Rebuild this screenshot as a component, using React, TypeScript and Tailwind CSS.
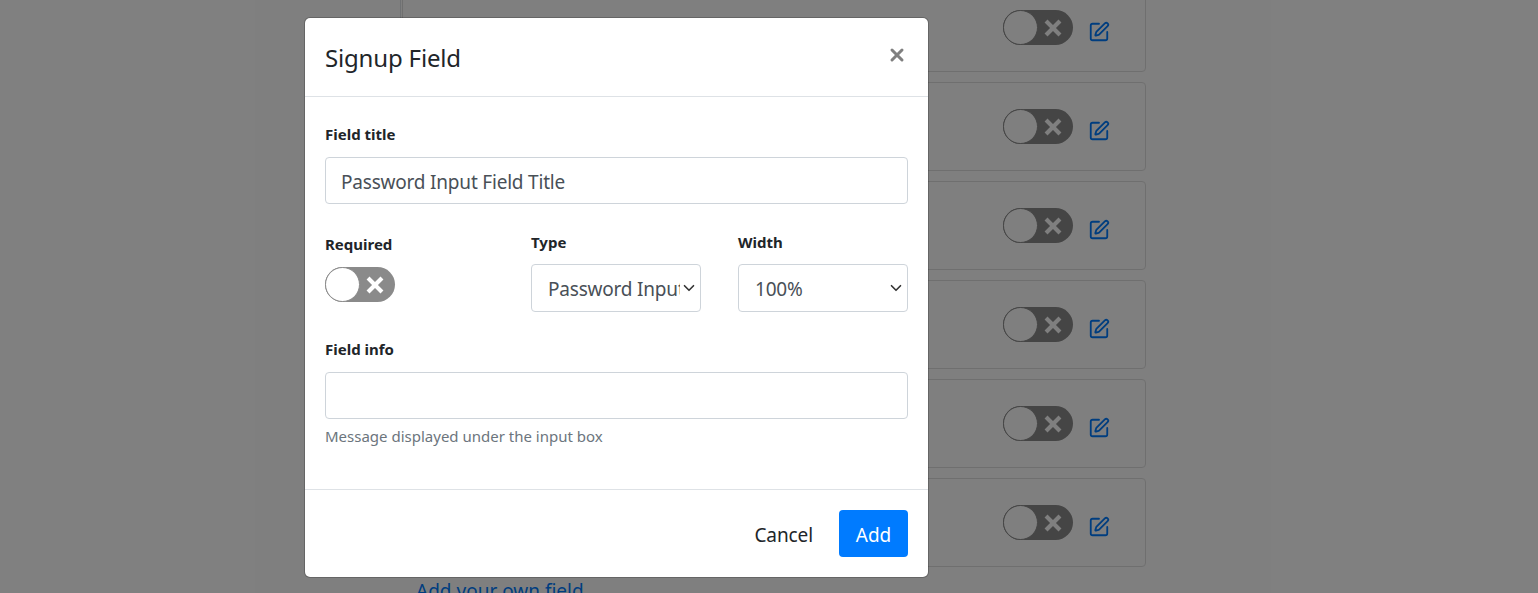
import { ChevronDown, SquarePen, X } from 'lucide-react'

const rows = [0, 1, 2, 3, 4, 5]

function Toggle() {
  return (
    <div className="relative h-[35px] w-[70px] rounded-full bg-[#8a8a8a]">
      <div className="h-[35px] w-[35px] rounded-full border border-[#8a8a8a] bg-white" />
      <X
        className="absolute left-[39px] top-[7px] h-[22px] w-[22px] text-white"
        strokeWidth={4.5}
        strokeLinecap="square"
      />
    </div>
  )
}

function Label({ children }: { children: React.ReactNode }) {
  return <div className="text-[15px] leading-[22px] font-bold text-[#212529]">{children}</div>
}

function Select({ value }: { value: string }) {
  return (
    <div className="relative mt-[11px] w-[170px]">
      <select className="h-[48px] w-full appearance-none rounded border border-[#ced4da] bg-white pt-[3px] pr-[20px] pl-[16px] text-[19px] tracking-[-0.2px] text-[#495057]">
        <option>{value}</option>
      </select>
      <ChevronDown className="pointer-events-none absolute right-[3px] top-[15px] h-[18px] w-[18px] text-[#333]" strokeWidth={2.2} />
    </div>
  )
}

export default function App() {
  return (
    <div className="relative h-[593px] w-[1538px] overflow-hidden bg-white font-['Noto_Sans','Open_Sans',sans-serif]">
      <div className="ml-[400px] h-[593px] w-[746px] border-l border-[#dee2e6] pl-px">
        <div className="-mt-[17px] flex flex-col gap-[10px]">
          {rows.map((row) => (
            <div
              key={row}
              className="flex h-[89px] items-center justify-end gap-[15px] rounded border border-[#dfdfdf] pr-[35px]"
            >
              <Toggle />
              <SquarePen className="mt-[8px] h-[22px] w-[22px] text-[#007bff]" strokeWidth={2} />
            </div>
          ))}
          <a className="ml-[14px] text-[19px] leading-[28px] text-[#007bff]">Add your own field</a>
        </div>
      </div>

      <div className="absolute inset-0 bg-black/50" />

      <div className="absolute left-[304px] top-[17px] flex h-[561px] w-[625px] flex-col rounded-[6px] border border-black/20 bg-white bg-clip-padding">
        <div className="flex h-[79px] shrink-0 items-center justify-between border-b border-[#dee2e6] pl-[20px] pr-[21px]">
          <h5 className="pt-[2px] text-[24px] leading-[36px] tracking-[-0.17px] text-[#212529]">Signup Field</h5>
          <X className="-mt-[4px] h-[20px] w-[20px] text-[#7f7f7f]" strokeWidth={3.6} />
        </div>

        <div className="flex grow flex-col px-[20px] pt-[26px]">
          <Label>Field title</Label>
          <input
            readOnly
            value="Password Input Field Title"
            className="mt-[12px] h-[47px] w-full rounded border border-[#ced4da] px-[15px] pt-[2px] text-[19px] tracking-[-0.2px] text-[#495057]"
          />

          <div className="mt-[27px] grid grid-cols-[206px_207px_170px]">
            <div className="pt-[2px]">
              <Label>Required</Label>
              <div className="mt-[12px]">
                <Toggle />
              </div>
            </div>
            <div>
              <Label>Type</Label>
              <Select value="Password Input" />
            </div>
            <div>
              <Label>Width</Label>
              <Select value="100%" />
            </div>
          </div>

          <div className="mt-[26px]">
            <Label>Field info</Label>
          </div>
          <input readOnly className="mt-[12px] h-[47px] w-full rounded border border-[#ced4da] px-[15px]" />
          <div className="mt-[6px] text-[15px] leading-[22px] text-[#6c757d]">Message displayed under the input box</div>
        </div>

        <div className="flex h-[88px] shrink-0 items-center justify-end gap-[26px] border-t border-[#dee2e6] pr-[20px]">
          <button className="pt-[4px] text-[19px] tracking-[-0.1px] text-[#212529]">Cancel</button>
          <button className="h-[47px] w-[69px] rounded bg-[#007bff] pt-[4px] text-[19px] text-white">Add</button>
        </div>
      </div>
    </div>
  )
}
